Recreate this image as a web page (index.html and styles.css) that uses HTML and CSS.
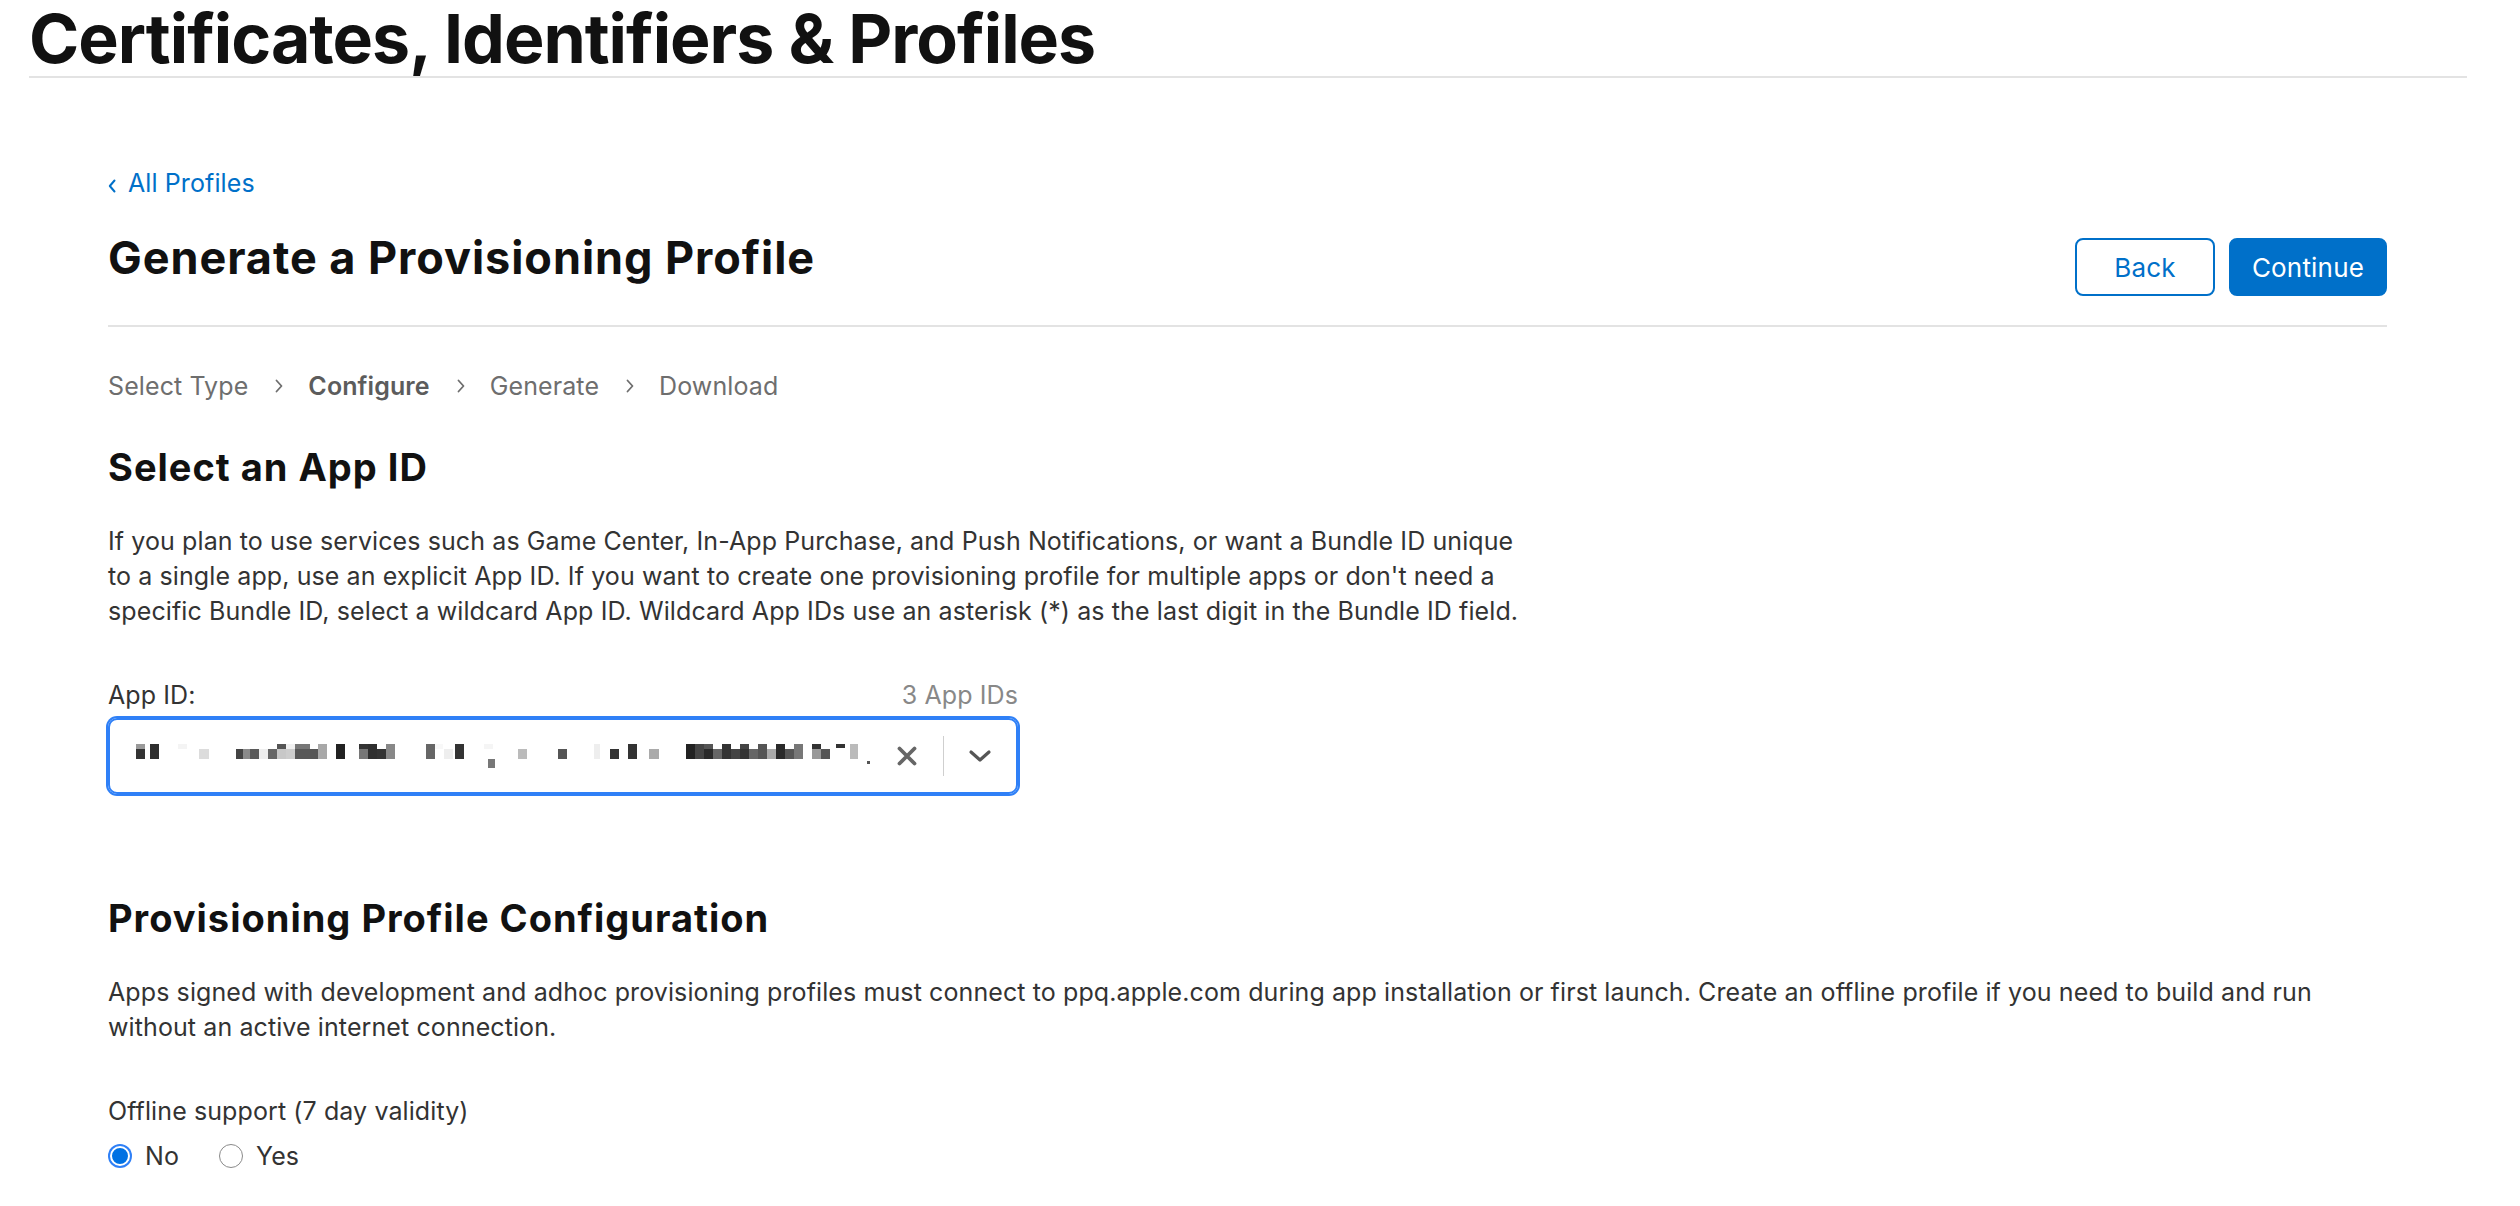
FILE: index.html
```html
<!DOCTYPE html>
<html lang="en">
<head>
<meta charset="utf-8">
<title>Certificates, Identifiers &amp; Profiles</title>
<link rel="stylesheet" href="styles.css">
</head>
<body>
<div class="page">
  <header class="site-header">
    <h1 class="site-title">Certificates, Identifiers &amp; Profiles</h1>
  </header>
  <main class="content">
    <a class="back-link" href="#"><svg class="back-chev" width="8" height="14" viewBox="0 0 8 14"><polyline points="6.5,1.5 1.8,7 6.5,12.5" fill="none" stroke="#0070c9" stroke-width="2" stroke-linecap="round" stroke-linejoin="round"/></svg>All Profiles</a>
    <div class="page-head">
      <h2 class="page-title">Generate a Provisioning Profile</h2>
      <div class="actions">
        <button class="btn btn-outline">Back</button>
        <button class="btn btn-primary">Continue</button>
      </div>
    </div>
    <div class="rule"></div>
    <nav class="steps">
      <span class="step">Select Type</span>
      <svg class="step-chev" width="8" height="14" viewBox="0 0 8 14"><polyline points="1.5,1.5 6.5,7 1.5,12.5" fill="none" stroke="#6e6e6e" stroke-width="1.8" stroke-linecap="round" stroke-linejoin="round"/></svg>
      <span class="step step-current">Configure</span>
      <svg class="step-chev" width="8" height="14" viewBox="0 0 8 14"><polyline points="1.5,1.5 6.5,7 1.5,12.5" fill="none" stroke="#6e6e6e" stroke-width="1.8" stroke-linecap="round" stroke-linejoin="round"/></svg>
      <span class="step">Generate</span>
      <svg class="step-chev" width="8" height="14" viewBox="0 0 8 14"><polyline points="1.5,1.5 6.5,7 1.5,12.5" fill="none" stroke="#6e6e6e" stroke-width="1.8" stroke-linecap="round" stroke-linejoin="round"/></svg>
      <span class="step">Download</span>
    </nav>

    <section class="section">
      <h3 class="section-title">Select an App ID</h3>
      <p class="copy">If you plan to use services such as Game Center, In-App Purchase, and Push Notifications, or want a Bundle ID unique<br>to a single app, use an explicit App ID. If you want to create one provisioning profile for multiple apps or don't need a<br>specific Bundle ID, select a wildcard App ID. Wildcard App IDs use an asterisk (*) as the last digit in the Bundle ID field.</p>
      <div class="field-head">
        <span class="field-label">App ID:</span>
        <span class="field-count">3 App IDs</span>
      </div>
      <div class="select">
        <svg class="mosaic" width="740" height="24" viewBox="0 0 740 24">
          <rect x="0" y="0" width="9" height="5" fill="#9a9a9a"/>
          <rect x="0" y="5" width="9" height="10" fill="#333"/>
          <rect x="14" y="0" width="9" height="15" fill="#2e2e2e"/>
          <rect x="42" y="0" width="9" height="5" fill="#f4f4f4"/>
          <rect x="63" y="5" width="10" height="10" fill="#dcdcdc"/>
          <rect x="100" y="5" width="7" height="10" fill="#444"/>
          <rect x="107" y="5" width="7" height="10" fill="#8a8a8a"/>
          <rect x="114" y="5" width="9" height="10" fill="#5a5a5a"/>
          <rect x="123" y="5" width="9" height="10" fill="#eee"/>
          <rect x="132" y="5" width="9" height="10" fill="#666"/>
          <rect x="141" y="0" width="9" height="5" fill="#555"/>
          <rect x="141" y="5" width="9" height="10" fill="#c8c8c8"/>
          <rect x="150" y="0" width="9" height="5" fill="#f0f0f0"/>
          <rect x="150" y="5" width="9" height="10" fill="#cdcdcd"/>
          <rect x="159" y="0" width="15" height="5" fill="#777"/>
          <rect x="159" y="5" width="15" height="10" fill="#585858"/>
          <rect x="174" y="5" width="8" height="10" fill="#555"/>
          <rect x="182" y="0" width="9" height="15" fill="#a8a8a8"/>
          <rect x="200" y="0" width="9" height="15" fill="#222"/>
          <rect x="223" y="0" width="9" height="5" fill="#333"/>
          <rect x="223" y="5" width="9" height="10" fill="#777"/>
          <rect x="232" y="0" width="9" height="15" fill="#2f2f2f"/>
          <rect x="241" y="5" width="9" height="10" fill="#333"/>
          <rect x="250" y="0" width="9" height="15" fill="#888"/>
          <rect x="290" y="0" width="9" height="15" fill="#666"/>
          <rect x="299" y="0" width="8" height="5" fill="#f8f8f8"/>
          <rect x="308" y="5" width="9" height="10" fill="#eee"/>
          <rect x="319" y="0" width="9" height="15" fill="#333"/>
          <rect x="348" y="0" width="9" height="5" fill="#f5f5f5"/>
          <rect x="352" y="15" width="7" height="9" fill="#777"/>
          <rect x="382" y="5" width="9" height="10" fill="#bbb"/>
          <rect x="422" y="5" width="9" height="10" fill="#555"/>
          <rect x="458" y="0" width="6" height="15" fill="#eee"/>
          <rect x="474" y="5" width="9" height="10" fill="#333"/>
          <rect x="492" y="0" width="9" height="15" fill="#333"/>
          <rect x="513" y="5" width="10" height="10" fill="#aaa"/>
          <rect x="550" y="0" width="9" height="15" fill="#222"/>
          <rect x="559" y="0" width="9" height="15" fill="#444"/>
          <rect x="568" y="0" width="9" height="5" fill="#555"/>
          <rect x="568" y="5" width="9" height="10" fill="#2a2a2a"/>
          <rect x="577" y="5" width="9" height="10" fill="#666"/>
          <rect x="586" y="0" width="9" height="15" fill="#333"/>
          <rect x="595" y="5" width="9" height="10" fill="#444"/>
          <rect x="604" y="0" width="9" height="5" fill="#444"/>
          <rect x="604" y="5" width="9" height="10" fill="#333"/>
          <rect x="613" y="5" width="9" height="10" fill="#666"/>
          <rect x="622" y="0" width="9" height="15" fill="#555"/>
          <rect x="631" y="5" width="9" height="10" fill="#aaa"/>
          <rect x="640" y="0" width="9" height="15" fill="#2a2a2a"/>
          <rect x="649" y="5" width="9" height="10" fill="#555"/>
          <rect x="658" y="0" width="9" height="15" fill="#777"/>
          <rect x="676" y="0" width="9" height="5" fill="#333"/>
          <rect x="676" y="5" width="9" height="10" fill="#999"/>
          <rect x="685" y="5" width="9" height="10" fill="#555"/>
          <rect x="700" y="0" width="9" height="4" fill="#333"/>
          <rect x="714" y="0" width="8" height="15" fill="#bbb"/>
          <rect x="731" y="17" width="3" height="3" fill="#555"/>
        </svg>
        <svg class="clear-icon" width="20" height="20" viewBox="0 0 20 20"><path d="M2.5 2.5 L17.5 17.5 M17.5 2.5 L2.5 17.5" stroke="#666" stroke-width="3.8" stroke-linecap="round"/></svg>
        <span class="select-sep"></span>
        <svg class="caret-icon" width="24" height="14" viewBox="0 0 24 14"><polyline points="3,3 12,11 21,3" fill="none" stroke="#555" stroke-width="3.2" stroke-linecap="round" stroke-linejoin="round"/></svg>
      </div>
    </section>

    <section class="section">
      <h3 class="section-title section-title-2">Provisioning Profile Configuration</h3>
      <p class="copy">Apps signed with development and adhoc provisioning profiles must connect to ppq.apple.com during app installation or first launch. Create an offline profile if you need to build and run<br>without an active internet connection.</p>
      <div class="field-head">
        <span class="field-label">Offline support (7 day validity)</span>
      </div>
      <div class="radios">
        <label class="radio"><span class="radio-dot radio-checked"></span>No</label>
        <label class="radio"><span class="radio-dot"></span>Yes</label>
      </div>
    </section>
  </main>
</div>
</body>
</html>
```

FILE: styles.css
```css
html, body {
  margin: 0;
  padding: 0;
  background: #fff;
}
body {
  font-family: Inter, "Noto Sans", "Liberation Sans", sans-serif;
  color: #333;
  font-size: 25px;
  letter-spacing: 0.1px;
}
.page {
  margin: 0 53px 0 29px;
}
.site-header {
  padding-top: 4px;
  border-bottom: 2px solid #e3e3e3;
  padding-bottom: 4px;
}
.site-title {
  margin: 0;
  font-size: 68px;
  line-height: 68px;
  font-weight: 700;
  letter-spacing: -1px;
  color: #111;
}
.content {
  padding: 0 80px 0 79px;
}
.back-link {
  display: inline-flex;
  align-items: center;
  margin-top: 88px;
  line-height: 34px;
  color: #0070c9;
  text-decoration: none;
}
.back-chev {
  margin: 5px 12px 0 0;
}
.page-head {
  display: flex;
  justify-content: space-between;
  align-items: flex-start;
}
.page-title {
  margin: 33px 0 0;
  font-size: 45px;
  line-height: 50px;
  font-weight: 700;
  letter-spacing: 0.95px;
  color: #111;
}
.actions {
  margin-top: 38px;
  display: flex;
  gap: 14px;
}
.btn {
  height: 58px;
  box-sizing: border-box;
  border-radius: 8px;
  border: 2px solid #0070c9;
  font-family: Inter, "Noto Sans", sans-serif;
  font-size: 26px;
  font-weight: 400;
  letter-spacing: 0.2px;
  padding: 0;
}
.btn-outline {
  width: 140px;
  background: #fff;
  color: #0070c9;
}
.btn-primary {
  width: 158px;
  background: #0070c9;
  color: #fff;
}
.rule {
  margin-top: 29px;
  height: 2px;
  background: #e3e3e3;
}
.steps {
  margin-top: 42px;
  display: flex;
  align-items: center;
  line-height: 34px;
  color: #6e6e6e;
}
.step-current {
  font-weight: 600;
  color: #5c5c5c;
}
.step-chev {
  margin: 0 25px 0 27px;
}
.section-title {
  margin: 42px 0 0;
  font-size: 38px;
  line-height: 44px;
  font-weight: 700;
  letter-spacing: 1px;
  color: #111;
}
.section-title-2 {
  margin-top: 102px;
}
.copy {
  margin: 35px 0 0;
  line-height: 35px;
  color: #333;
  white-space: nowrap;
}
.field-head {
  margin-top: 49px;
  width: 910px;
  display: flex;
  justify-content: space-between;
  line-height: 34px;
}
.field-label {
  color: #333;
}
.field-count {
  color: #888;
}
.select {
  margin-top: 6px;
  width: 910px;
  height: 76px;
  box-sizing: border-box;
  border: 2px solid #2f80f7;
  box-shadow: 0 0 0 2px #2f80f7;
  border-radius: 9px;
  display: flex;
  align-items: center;
  padding: 0 24px 0 26px;
}
.clear-icon {
  margin-left: auto;
}
.select-sep {
  width: 1px;
  height: 40px;
  background: #cfcfcf;
  margin: 0 24px 0 26px;
}
.radios {
  margin-top: 11px;
  display: flex;
  align-items: center;
  line-height: 34px;
  gap: 40px;
}
.radio {
  display: flex;
  align-items: center;
  gap: 13px;
  color: #333;
}
.radio-dot {
  width: 24px;
  height: 24px;
  box-sizing: border-box;
  border-radius: 50%;
  border: 1.5px solid #8a8a8a;
  background: #fff;
}
.radio-checked {
  width: 20px;
  height: 20px;
  margin: 2px;
  border: 2px solid #fff;
  background: #0071e3;
  box-shadow: 0 0 0 2px #2f80f7;
}
```
